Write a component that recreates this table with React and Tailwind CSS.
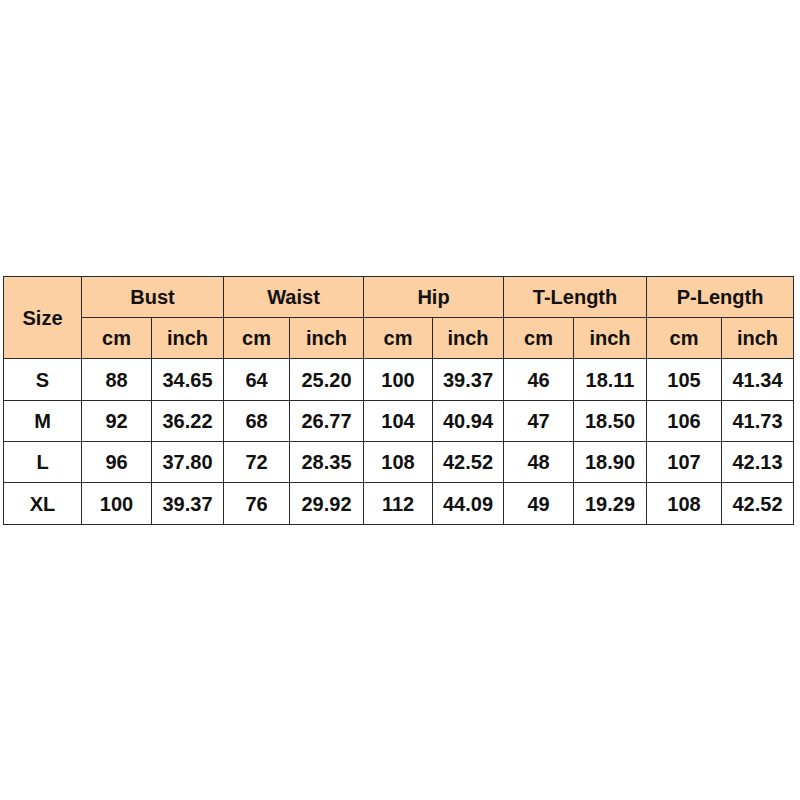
const widths = [78, 70, 72, 66, 74, 69, 71, 70, 73, 75, 72];

const groups = ["Bust", "Waist", "Hip", "T-Length", "P-Length"];

const rows = [
  ["S", "88", "34.65", "64", "25.20", "100", "39.37", "46", "18.11", "105", "41.34"],
  ["M", "92", "36.22", "68", "26.77", "104", "40.94", "47", "18.50", "106", "41.73"],
  ["L", "96", "37.80", "72", "28.35", "108", "42.52", "48", "18.90", "107", "42.13"],
  ["XL", "100", "39.37", "76", "29.92", "112", "44.09", "49", "19.29", "108", "42.52"],
];

const rowHeights = ["h-[42px]", "h-[41px]", "h-[41px]", "h-[42px]"];

const cell = "border border-[#2a2a2a] text-center align-middle p-0";

export default function App() {
  return (
    <div className="w-[800px] h-[800px] bg-white pt-[276px]">
      <table
        className="ml-[3px] table-fixed border-collapse text-[20px] font-bold text-[#111] leading-none"
        style={{ fontFamily: '"Liberation Sans", Arial, sans-serif', width: 790 }}
      >
        <colgroup>
          {widths.map((w, i) => (
            <col key={i} style={{ width: w }} />
          ))}
        </colgroup>
        <thead>
          <tr className="h-[41px] bg-[#fdd0a3]">
            <th rowSpan={2} className={cell}>Size</th>
            {groups.map((g) => (
              <th key={g} colSpan={2} className={cell}>{g}</th>
            ))}
          </tr>
          <tr className="h-[41px] bg-[#fdd0a3]">
            {groups.map((g) => [
              <th key={g + "cm"} className={cell}>cm</th>,
              <th key={g + "in"} className={cell}>inch</th>,
            ])}
          </tr>
        </thead>
        <tbody>
          {rows.map((r, ri) => (
            <tr key={r[0]} className={rowHeights[ri]}>
              {r.map((v, i) => (
                <td key={i} className={cell}>{v}</td>
              ))}
            </tr>
          ))}
        </tbody>
      </table>
    </div>
  );
}
